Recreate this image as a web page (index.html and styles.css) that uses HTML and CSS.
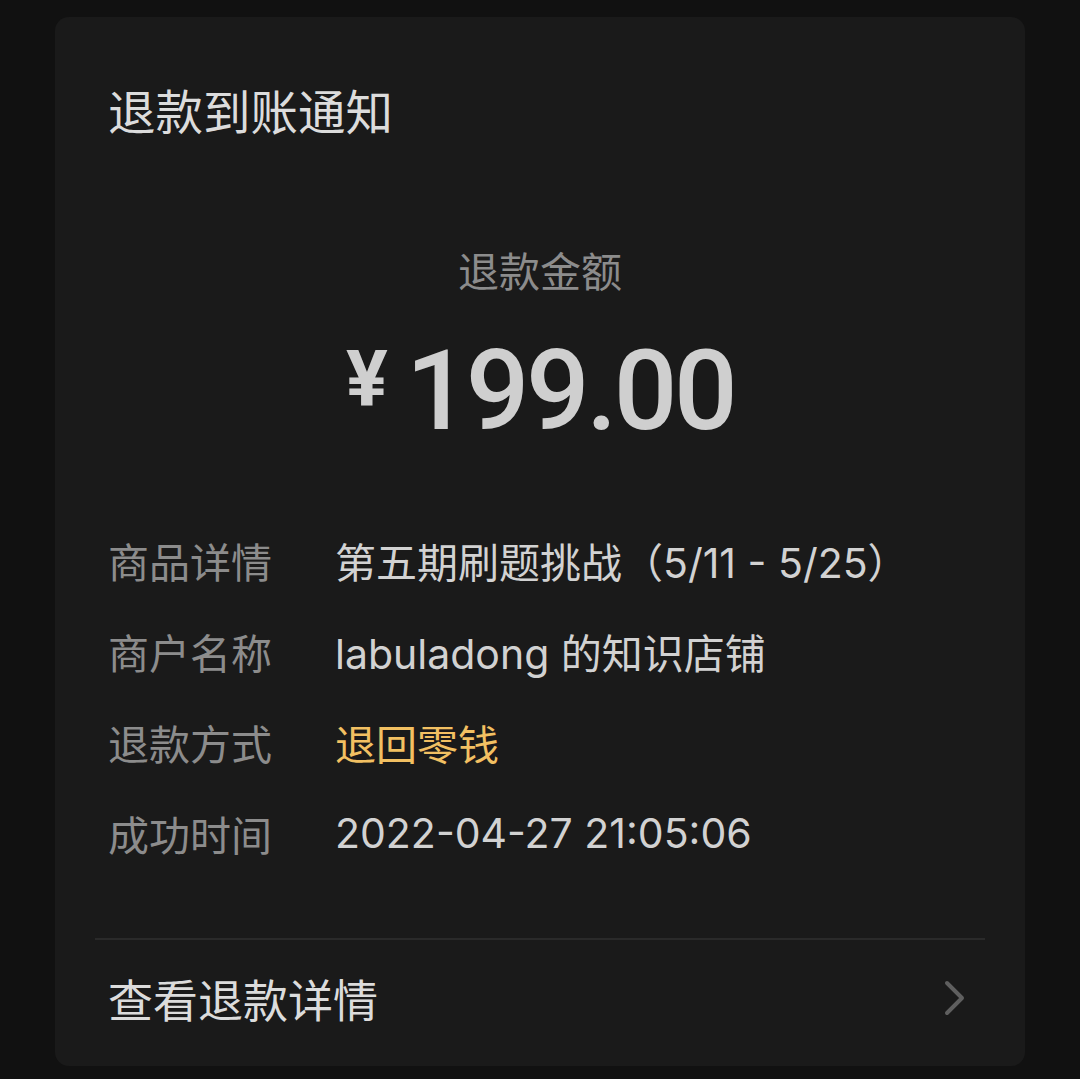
FILE: index.html
```html
<!DOCTYPE html>
<html lang="zh-CN">
<head>
<meta charset="utf-8">
<link rel="stylesheet" href="styles.css">
</head>
<body>
<div class="card">
  <div class="title">退款到账通知</div>
  <div class="amount-label">退款金额</div>
  <div class="amount"><span class="yen">¥</span><span class="num">199.00</span></div>
  <div class="rows">
    <div class="row"><span class="label">商品详情</span><span class="value">第五期刷题挑战（5/11 - 5/25）</span></div>
    <div class="row"><span class="label">商户名称</span><span class="value">labuladong 的知识店铺</span></div>
    <div class="row"><span class="label">退款方式</span><span class="value gold">退回零钱</span></div>
    <div class="row"><span class="label">成功时间</span><span class="value">2022-04-27 21:05:06</span></div>
  </div>
  <div class="divider"></div>
  <div class="footer">
    <span class="footer-text">查看退款详情</span>
    <svg class="chevron" width="22" height="36" viewBox="0 0 22 36"><path d="M3 3 L18 18 L3 33" fill="none" stroke="#5f5f5f" stroke-width="4" stroke-linecap="round" stroke-linejoin="round"/></svg>
  </div>
</div>
</body>
</html>
```
FILE: styles.css
```css
html, body {
  margin: 0;
  padding: 0;
  background: #111111;
}
body {
  width: 1080px;
  height: 1079px;
  font-family: Inter, "Noto Sans CJK SC", sans-serif;
  overflow: hidden;
}
.card {
  margin: 17px 0 0 55px;
  width: 970px;
  height: 1049px;
  background: #1a1a1a;
  border-radius: 14px;
  box-sizing: border-box;
  padding-top: 68px;
}
.title {
  padding-left: 53px;
  font-size: 47.5px;
  line-height: 56px;
  color: #dcdcdc;
}
.amount-label {
  margin-top: 106px;
  text-align: center;
  font-size: 41px;
  line-height: 50px;
  color: #8c8c8c;
}
.amount {
  margin-top: 28px;
  height: 130px;
  display: flex;
  justify-content: center;
  align-items: center;
  color: #cfcfcf;
  font-family: Roboto, "Noto Sans", sans-serif;
  font-weight: 500;
}
.yen {
  font-size: 78px;
  font-weight: 700;
  margin-right: 18px;
  margin-top: -22px;
}
.num {
  font-size: 112px;
  letter-spacing: -3.5px;
}
.rows {
  margin-top: 59px;
  padding-left: 53px;
}
.row {
  display: flex;
  height: 91px;
  align-items: center;
  font-size: 41px;
}
.label {
  width: 227px;
  color: #8c8c8c;
}
.value {
  color: #d2d2d2;
}
.gold {
  color: #f2c062;
}
.divider {
  margin: 60px 40px 0 40px;
  height: 2px;
  background: #2a2a2a;
}
.footer {
  margin-top: 28px;
  height: 60px;
  display: flex;
  align-items: center;
  justify-content: space-between;
  padding: 0 59px 0 53px;
}
.footer-text {
  font-size: 45px;
  color: #dcdcdc;
}
.chevron {
  display: block;
}
```
